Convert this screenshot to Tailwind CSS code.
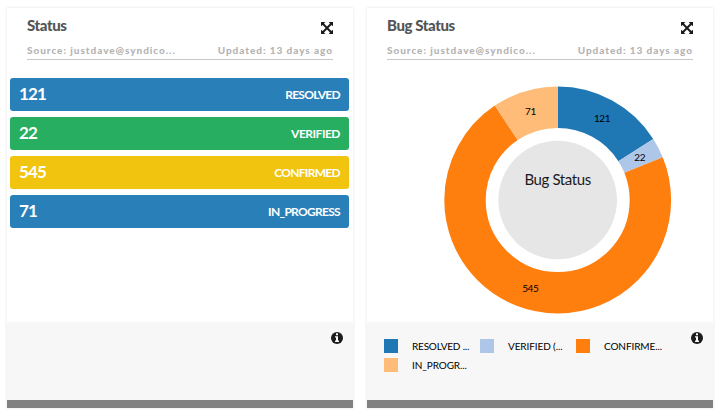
<!DOCTYPE html>
<html lang="en">
<head>
<meta charset="utf-8">
<title>Bug Status</title>
<script src="https://cdn.jsdelivr.net/npm/@tailwindcss/browser@4"></script>
</head>
<body class="bg-white w-[719px] h-[412px] overflow-hidden font-['Lato',sans-serif]">
<svg class="hidden">
  <symbol id="expand" viewBox="0 0 12 12"><path fill="#1b1b1b" d="M0 0H4.3L3 1.6 6 4.6 9 1.6 7.7 0H12V4.3L10.4 3 7.4 6 10.4 9 12 7.7V12H7.7L9 10.4 6 7.4 3 10.4 4.3 12H0V7.7L1.6 9 4.6 6 1.6 3 0 4.3Z"/></symbol>
  <symbol id="info" viewBox="0 0 12 12"><circle cx="6" cy="6" r="6" fill="#1b1b1b"/><path fill="#f7f7f7" d="M5 1.3H7V3.2H5ZM4 4.3H7V8.5H8V10H4V8.5H5V5.6H4Z"/></symbol>
</svg>
<main class="flex gap-[14px] pt-2 pl-[7px]">
  <section class="w-[346px] h-[400px] shrink-0 flex flex-col bg-white shadow-[0_0_3px_rgba(0,0,0,0.12)]">
    <header class="mx-5 h-[52px] shrink-0 border-b border-[#c8c8c8]">
      <div class="flex justify-between h-[35px] pt-[8px]">
        <h2 class="text-[15px] leading-[18px] font-black tracking-[-0.4px] text-[#555] whitespace-nowrap">Status</h2>
        <svg class="size-3 mt-[6px]"><use href="#expand"/></svg>
      </div>
      <div class="flex justify-between text-[10px] leading-[15px] font-black tracking-[0.95px] text-[#b4b4b4] whitespace-nowrap">
        <span>Source: justdave@syndico...</span><span>Updated: 13 days ago</span>
      </div>
    </header>
    <div class="flex-1 pt-[18px] pl-[3px] pr-1 flex flex-col gap-[6px] text-white font-bold">
      <div class="h-[33px] rounded-[3px] bg-[#2980b9] flex items-center justify-between px-[9px]"><span class="text-[17px] tracking-[-0.9px] -mt-px">121</span><span class="text-[12px] tracking-[-0.7px]">RESOLVED</span></div>
      <div class="h-[33px] rounded-[3px] bg-[#27ae60] flex items-center justify-between px-[9px]"><span class="text-[17px] tracking-[-0.9px] -mt-px">22</span><span class="text-[12px] tracking-[-0.5px]">VERIFIED</span></div>
      <div class="h-[33px] rounded-[3px] bg-[#f1c40f] flex items-center justify-between px-[9px]"><span class="text-[17px] tracking-[-0.9px] -mt-px">545</span><span class="text-[12px] tracking-[-0.7px]">CONFIRMED</span></div>
      <div class="h-[33px] rounded-[3px] bg-[#2980b9] flex items-center justify-between px-[9px]"><span class="text-[17px] tracking-[-0.9px] -mt-px">71</span><span class="text-[12px] tracking-[-0.7px]">IN_PROGRESS</span></div>
    </div>
    <footer class="h-[86px] shrink-0 bg-[#f7f7f7] border-b-8 border-[#808080] flex justify-end pt-[10px] pr-[10px]">
      <svg class="size-3"><use href="#info"/></svg>
    </footer>
  </section>
  <section class="w-[346px] h-[400px] shrink-0 flex flex-col bg-white shadow-[0_0_3px_rgba(0,0,0,0.12)]">
    <header class="mx-5 h-[52px] shrink-0 border-b border-[#c8c8c8]">
      <div class="flex justify-between h-[35px] pt-[8px]">
        <h2 class="text-[15px] leading-[18px] font-black tracking-[-0.4px] text-[#555] whitespace-nowrap">Bug Status</h2>
        <svg class="size-3 mt-[6px]"><use href="#expand"/></svg>
      </div>
      <div class="flex justify-between text-[10px] leading-[15px] font-black tracking-[0.95px] text-[#b4b4b4] whitespace-nowrap">
        <span>Source: justdave@syndico...</span><span>Updated: 13 days ago</span>
      </div>
    </header>
    <svg class="w-[346px] h-[262px] shrink-0" viewBox="367 60 346 262">
      <g fill="none" stroke-width="41.4" transform="rotate(-90 557.7 200)">
        <circle cx="557.7" cy="200" r="92.7" pathLength="759" stroke="#1f77b4" stroke-dasharray="121 638"/>
        <circle cx="557.7" cy="200" r="92.7" pathLength="759" stroke="#aec7e8" stroke-dasharray="22 737" stroke-dashoffset="-121"/>
        <circle cx="557.7" cy="200" r="92.7" pathLength="759" stroke="#ff7f0e" stroke-dasharray="545 214" stroke-dashoffset="-143"/>
        <circle cx="557.7" cy="200" r="92.7" pathLength="759" stroke="#ffbb78" stroke-dasharray="71 688" stroke-dashoffset="-688"/>
      </g>
      <circle cx="557.7" cy="200" r="59.3" fill="#e6e6e6"/>
      <g class="text-[10px] tracking-[-0.4px]" fill="#000" text-anchor="middle">
        <text x="602" y="122">121</text>
        <text x="639.7" y="161">22</text>
        <text x="530.3" y="292">545</text>
        <text x="530.5" y="115">71</text>
      </g>
      <text class="text-[15px] tracking-[-0.4px]" x="557.6" y="185" fill="#1b1b1b" text-anchor="middle">Bug Status</text>
    </svg>
    <footer class="h-[86px] shrink-0 bg-[#f7f7f7] border-b-8 border-[#808080] flex justify-between pt-[10px] pl-[17px] pr-[10px]">
      <div class="grid grid-cols-[96px_96px_90px] auto-rows-[19px] content-start pt-[4.5px] text-[10px] text-black tracking-[-0.1px] whitespace-nowrap">
        <div class="flex items-center gap-[14px]"><i class="size-[14px] bg-[#1f77b4]"></i><span class="tracking-[-0.2px]">RESOLVED ...</span></div>
        <div class="flex items-center gap-[14px]"><i class="size-[14px] bg-[#aec7e8]"></i><span>VERIFIED (...</span></div>
        <div class="flex items-center gap-[14px]"><i class="size-[14px] bg-[#ff7f0e]"></i><span>CONFIRME...</span></div>
        <div class="flex items-center gap-[14px]"><i class="size-[14px] bg-[#ffbb78]"></i><span>IN_PROGR...</span></div>
      </div>
      <svg class="size-3"><use href="#info"/></svg>
    </footer>
  </section>
</main>
</body>
</html>
